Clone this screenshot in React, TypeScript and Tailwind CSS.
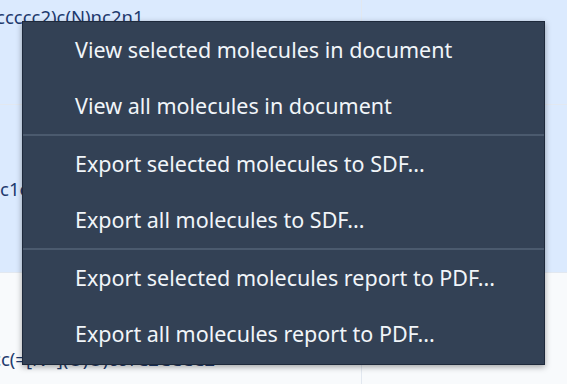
import React from "react";

const rows = [
  { smiles: "ccccc2)c(N)nc2n1", shift: "-ml-[4px]", bg: "bg-[#dbeafe]", h: "h-[176px]", pad: "pt-0" },
  { smiles: "c1ccc(Cl)cc1C(=O)N", shift: "ml-0", bg: "bg-[#dbeafe]", h: "h-[168px]", pad: "pt-0" },
  { smiles: "Cc1ccc(=[N+](O)O)cc1C2CCCC2", shift: "-ml-[48px]", bg: "bg-[#f8fafc]", h: "h-[168px]", pad: "pt-[5px]" },
];

const groups = [
  ["View selected molecules in document", "View all molecules in document"],
  ["Export selected molecules to SDF...", "Export all molecules to SDF..."],
  ["Export selected molecules report to PDF...", "Export all molecules report to PDF..."],
];

type Row = { smiles: string; shift: string; bg: string; h: string; pad: string };

function MoleculeRow({ smiles, shift, bg, h, pad }: Row) {
  return (
    <div className={`flex border-b border-[#e2e8f0] ${h} ${bg}`}>
      <div className={`w-[362px] shrink-0 overflow-hidden border-r border-[#e2e8f0] flex items-center ${pad}`}>
        <span className={`whitespace-nowrap text-[18.5px] text-[#1e3a6e] ${shift}`}>{smiles}</span>
      </div>
      <div className="flex-1" />
    </div>
  );
}

export default function App() {
  return (
    <div
      className="relative h-[384px] w-[567px] overflow-hidden bg-[#f8fafc]"
      style={{ fontFamily: '"Noto Sans", "Open Sans", sans-serif' }}
    >
      <div className="-mt-[71px]">
        {rows.map((r) => (
          <MoleculeRow key={r.smiles} {...r} />
        ))}
      </div>

      {/* context menu */}
      <div className="absolute left-[22px] top-[21px] w-[523px] border border-[#1e293b] bg-[#334155] pb-[2px] shadow-[0_2px_6px_rgba(0,0,0,0.35)]">
        {groups.map((items, gi) => (
          <div key={gi} className={gi > 0 ? "border-t-2 border-[#4b5a6e]" : ""}>
            {items.map((label) => (
              <div key={label} className="flex h-[56px] items-center pl-[52px] text-[21.5px] text-[#f1f5f9]">
                {label}
              </div>
            ))}
          </div>
        ))}
      </div>
    </div>
  );
}
